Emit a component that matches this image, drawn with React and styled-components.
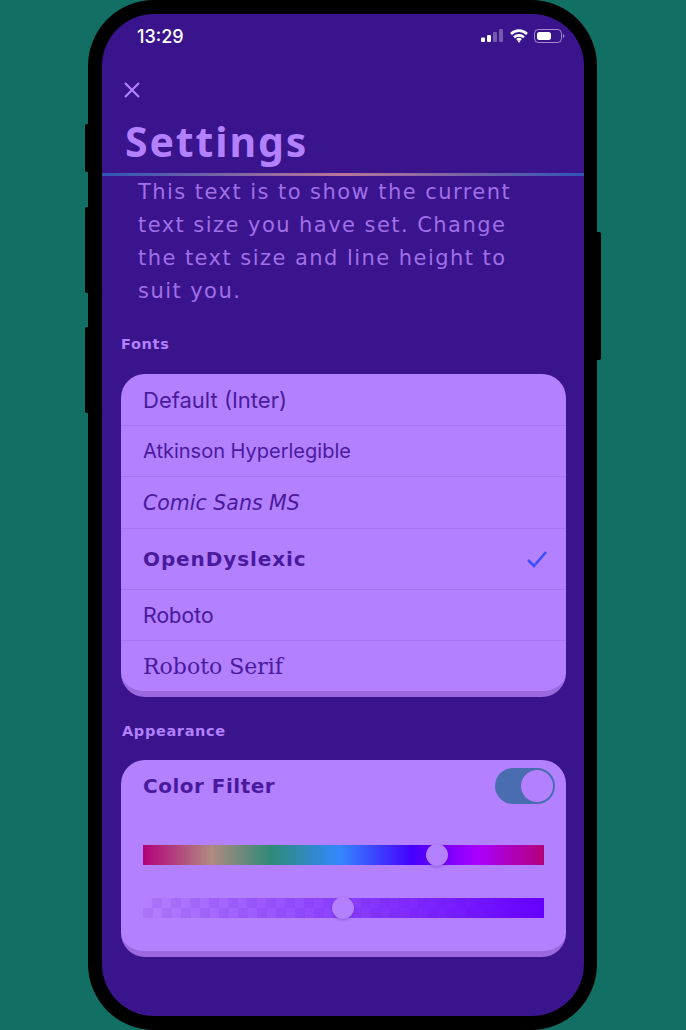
import React from 'react';
import styled, {createGlobalStyle} from 'styled-components';

const Global = createGlobalStyle`
html, body {
  margin: 0;
  padding: 0;
  background: #126f64;
}
`;

const Page = styled.div`
width: 686px;
height: 1030px;
background: #126f64;
overflow: hidden;
padding-left: 88px;
box-sizing: border-box;
`;

const Phone = styled.div`
position: relative;
width: 509px;
height: 1030px;
box-sizing: border-box;
background: #000;
border-radius: 66px;
padding: 14px 13px 14px 14px;
`;

const SideButton = styled.div`
position: absolute;
top: ${props => props.top}px;
height: ${props => props.height}px;
${props => props.right ? 'right: -4px;' : 'left: -3px;'}
width: 6px;
background: #000;
border-radius: 2px;
`;

const Screen = styled.div`
height: 100%;
background: #3a148c;
border-radius: 52px;
overflow: hidden;
font-family: "DejaVu Sans", sans-serif;
`;

const StatusBar = styled.div`
height: 44px;
padding: 0 19px 0 35px;
display: flex;
align-items: center;
justify-content: space-between;
`;

const Time = styled.div`
font-family: Inter, sans-serif;
font-size: 18px;
font-weight: 500;
color: #fff;
`;

const StatusIcons = styled.div`
display: flex;
align-items: center;
gap: 6px;
`;

const Close = styled.div`
height: 16px;
margin: 24px 0 0 22px;
display: flex;
`;

const Title = styled.h1`
margin: 18px 0 0 23px;
font-family: "Noto Sans", sans-serif;
font-size: 41px;
line-height: 50px;
font-weight: 700;
letter-spacing: 1.9px;
color: #b380ff;
`;

const Rainbow = styled.div`
height: 3px;
margin-top: 7px;
background: linear-gradient(90deg, #2f55b5 0%, #7a64a8 25%, #b9749a 50%, #7a64a8 75%, #2f55b5 100%);
`;

const Preview = styled.p`
margin: 0 0 0 36px;
width: 400px;
font-size: 21px;
line-height: 33px;
letter-spacing: 1.45px;
color: #a06fe8;
`;

const SectionLabel = styled.div`
margin: ${props => props.top}px 0 0 ${props => props.left}px;
height: 20px;
font-size: 14.5px;
line-height: 20px;
font-weight: 700;
letter-spacing: 0.65px;
color: #b380ff;
`;

const Card = styled.div`
margin: ${props => props.top}px 18px 0 19px;
background: #b380ff;
border-radius: 24px;
border-bottom: 6px solid #9b68e0;
overflow: hidden;
`;

const Row = styled.div`
height: ${props => props.height}px;
box-sizing: border-box;
padding: 0 18px 0 22px;
display: flex;
align-items: center;
justify-content: space-between;
color: #4a1a9e;
border-bottom: ${props => props.last ? 'none' : '1px solid #a673f2'};
`;

const FontName = styled.span`
font-family: ${props => props.family};
font-size: ${props => props.size}px;
font-style: ${props => props.italic ? 'italic' : 'normal'};
font-weight: ${props => props.bold ? 700 : 400};
letter-spacing: ${props => props.spacing || 0}px;
`;

const FilterHead = styled.div`
height: 52px;
padding: 0 11px 0 22px;
display: flex;
align-items: center;
justify-content: space-between;
`;

const FilterName = styled.span`
font-size: 20px;
font-weight: 700;
letter-spacing: 0.5px;
color: #4a1a9e;
`;

const Toggle = styled.div`
width: 60px;
height: 36px;
box-sizing: border-box;
border-radius: 18px;
background: #4a6cb0;
padding: 2px;
display: flex;
justify-content: flex-end;
`;

const ToggleKnob = styled.div`
width: 32px;
height: 32px;
border-radius: 50%;
background: #b380ff;
`;

const Sliders = styled.div`
padding: 33px 22px 33px 22px;
display: flex;
flex-direction: column;
gap: 33px;
`;

const Track = styled.div`
position: relative;
height: 20px;
background: ${props => props.background};
`;

const Thumb = styled.div`
position: absolute;
top: -1px;
left: ${props => props.left}px;
width: 22px;
height: 22px;
margin-left: -11px;
border-radius: 50%;
background: #b380ff;
box-shadow: 0 1px 3px rgba(60, 20, 140, 0.35);
`;

const hueTrack = 'linear-gradient(90deg, #b3007a 0%, #b08a80 17%, #2f8a78 32%, #3388ff 49%, #4400ff 67%, #aa00ff 83.5%, #b3007a 100%)';
const alphaTrack = 'linear-gradient(90deg, rgba(102,0,255,0) 0%, #6600ff 100%), repeating-conic-gradient(rgba(90,30,190,0.1) 0 25%, transparent 0 50%) 0 0 / 19px 20px';

const fonts = [
  {name: 'Default (Inter)', family: 'Inter, sans-serif', size: 22, height: 52},
  {name: 'Atkinson Hyperlegible', family: 'Inter, sans-serif', size: 20, height: 51},
  {name: 'Comic Sans MS', family: '"DejaVu Sans", sans-serif', size: 20.5, height: 52, italic: true},
  {name: 'OpenDyslexic', family: '"DejaVu Sans", sans-serif', size: 20, height: 61, bold: true, spacing: 0.9, selected: true},
  {name: 'Roboto', family: 'Roboto, sans-serif', size: 22, height: 51},
  {name: 'Roboto Serif', family: '"DejaVu Serif", serif', size: 22, height: 50},
];

const Signal = () => (
  <svg width="23" height="14" viewBox="0 0 23 14">
    <rect x="0" y="8.5" width="4" height="4.5" rx="1" fill="#fff" />
    <rect x="6" y="6" width="4" height="7" rx="1" fill="#fff" />
    <rect x="12" y="3" width="4" height="10" rx="1" fill="#fff" opacity="0.3" />
    <rect x="18" y="0" width="4" height="13" rx="1" fill="#fff" opacity="0.3" />
  </svg>
);

const Wifi = () => (
  <svg width="18" height="14" viewBox="0 0 18 14" fill="none" stroke="#fff" strokeWidth="2.6">
    <path d="M1 5 C5.5 0.5 12.5 0.5 17 5" />
    <path d="M4 8.2 C6.8 5.7 11.2 5.7 14 8.2" />
    <path d="M7 11 C8.2 10 9.8 10 11 11" />
    <circle cx="9" cy="12.6" r="0.6" fill="#fff" strokeWidth="1" />
  </svg>
);

const Battery = () => (
  <svg width="31" height="15" viewBox="0 0 31 15">
    <rect x="0.5" y="0.5" width="27" height="13" rx="4" fill="none" stroke="#fff" strokeOpacity="0.5" />
    <rect x="3" y="3" width="14" height="8" rx="2.5" fill="#fff" />
    <path d="M29 5 C30 5.5 30.5 6.2 30.5 7 C30.5 7.8 30 8.5 29 9 Z" fill="#fff" fillOpacity="0.5" />
  </svg>
);

const App = () => {
  return <Page>
    <Global />
    <Phone>
      <SideButton top={124} height={48} />
      <SideButton top={207} height={86} />
      <SideButton top={327} height={86} />
      <SideButton right top={232} height={128} />
      <Screen>
        <StatusBar>
          <Time>13:29</Time>
          <StatusIcons>
            <Signal />
            <Wifi />
            <Battery />
          </StatusIcons>
        </StatusBar>
        <Close>
          <svg width="16" height="16" viewBox="0 0 16 16" stroke="#b380ff" strokeWidth="2.2">
            <path d="M1 1 L15 15 M15 1 L1 15" />
          </svg>
        </Close>
        <Title>Settings</Title>
        <Rainbow />
        <Preview>This text is to show the current text size you have set. Change the text size and line height to suit you.</Preview>
        <SectionLabel top={26} left={19}>Fonts</SectionLabel>
        <Card top={20}>
          {fonts.map((f, i) => (
            <Row key={f.name} height={f.height} last={i === fonts.length - 1}>
              <FontName family={f.family} size={f.size} italic={f.italic} bold={f.bold} spacing={f.spacing}>{f.name}</FontName>
              {f.selected && (
                <svg width="22" height="18" viewBox="0 0 22 18" fill="none" stroke="#3d4fff" strokeWidth="2.6">
                  <path d="M2 10 L8 16 L20 2" />
                </svg>
              )}
            </Row>
          ))}
        </Card>
        <SectionLabel top={24} left={20}>Appearance</SectionLabel>
        <Card top={19}>
          <FilterHead>
            <FilterName>Color Filter</FilterName>
            <Toggle><ToggleKnob /></Toggle>
          </FilterHead>
          <Sliders>
            <Track background={hueTrack}><Thumb left={294} /></Track>
            <Track background={alphaTrack}><Thumb left={200} /></Track>
          </Sliders>
        </Card>
      </Screen>
    </Phone>
  </Page>
}

export default App;
